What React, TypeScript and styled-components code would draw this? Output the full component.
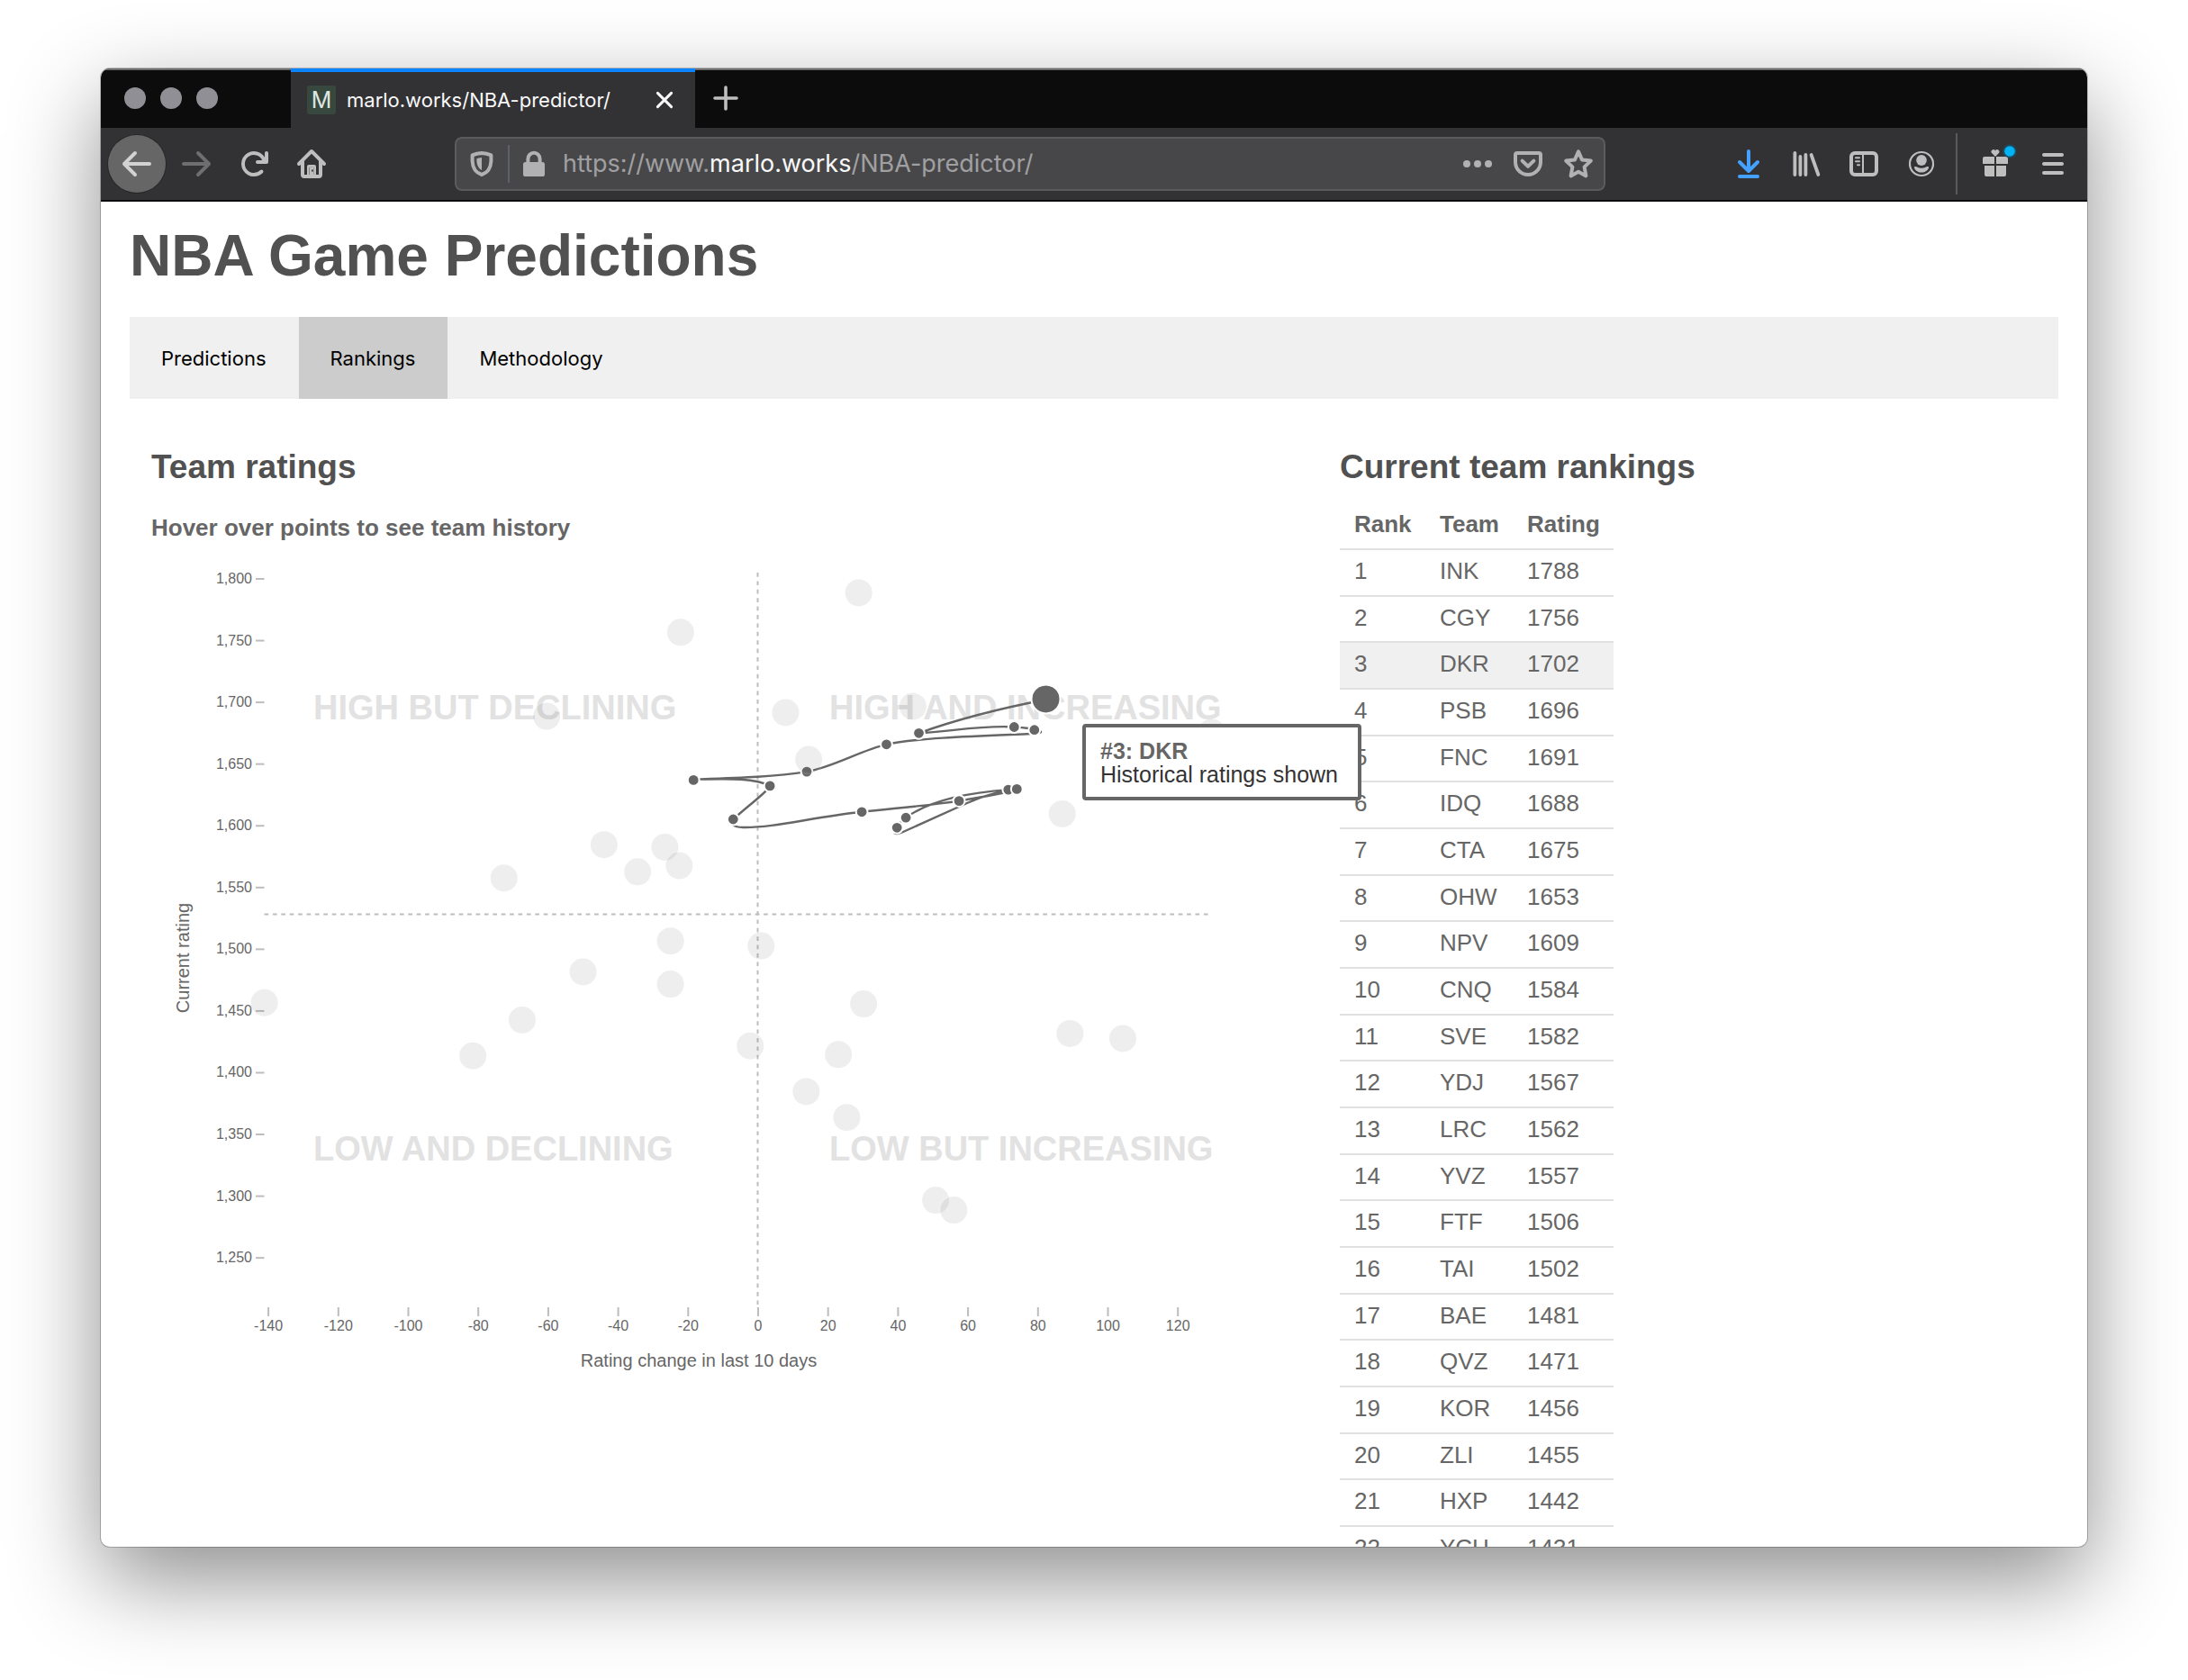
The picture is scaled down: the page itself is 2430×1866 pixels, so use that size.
import React from "react";
import styled, { createGlobalStyle, css } from "styled-components";

const sans = `"Liberation Sans", Helvetica, Arial, sans-serif`;
const ui = `Inter, "Helvetica Neue", sans-serif`;

const GlobalStyle = createGlobalStyle`
  *, *::before, *::after { box-sizing: border-box; }
  body { margin: 0; background: #fff; font-family: ${sans}; color: #666; }
  button { margin: 0; padding: 0; border: 0; background: none; font: inherit; color: inherit; cursor: pointer; }
`;

/* ---------- window and browser chrome ---------- */

const Desktop = styled.div`
  display: flex;
  height: 100vh;
  padding: 76px 112px 148px;
  overflow: hidden;
`;

const BrowserWindow = styled.div`
  flex: 1;
  min-width: 0;
  display: flex;
  flex-direction: column;
  border-radius: 10px;
  background: #fff;
  overflow: hidden;
  box-shadow: 0 0 0 1px rgba(0, 0, 0, 0.22), 0 36px 100px rgba(0, 0, 0, 0.45);
`;

const TabBar = styled.div`
  flex: none;
  display: flex;
  align-items: center;
  height: 66px;
  padding-left: 26px;
  background: #0c0c0d;
  box-shadow: inset 0 2px 0 #6c6c6d;
`;

const Lights = styled.div`
  display: flex;
  gap: 16px;
  width: 185px;
`;

const Light = styled.button`
  width: 24px;
  height: 24px;
  border-radius: 50%;
  background: #918f96;
`;

const Tab = styled.div`
  display: flex;
  align-items: center;
  width: 449px;
  height: 66px;
  padding: 0 18px;
  border-top: 4px solid #0a84ff;
  background: #323234;
  color: #f9f9fa;
  font: 400 22px/28px ${ui};
`;

const Favicon = styled.span`
  width: 32px;
  height: 32px;
  margin-right: 12px;
  border-radius: 3px;
  background: #37493f;
  color: #dfe6e2;
  font: 400 25px/32px ${ui};
  text-align: center;
`;

const TabTitle = styled.span`
  flex: 1;
  white-space: nowrap;
`;

const TabButton = styled.button`
  display: flex;
  align-items: center;
  justify-content: center;
  width: 32px;
  height: 32px;
`;

const NewTab = styled(TabButton)`
  margin-left: 18px;
`;

const Toolbar = styled.div`
  flex: none;
  display: flex;
  align-items: center;
  height: 82px;
  padding: 0 6px 0 8px;
  border-bottom: 2px solid #0c0c0d;
  background: #323234;
  color: #bebebf;
`;

const ToolButton = styled.button<{ $round?: boolean; $dim?: boolean; $tint?: string }>`
  flex: none;
  display: flex;
  align-items: center;
  justify-content: center;
  width: 64px;
  height: 64px;
  color: ${(p) => p.$tint ?? (p.$dim ? "#6e6e70" : "inherit")};
  ${(p) =>
    p.$round &&
    css`
      margin-right: 2px;
      border-radius: 50%;
      background: #666667;
      color: #d2d2d3;
      box-shadow: 0 0 0 1px #272728;
    `}
`;

const Divider = styled.span`
  flex: none;
  width: 2px;
  height: 68px;
  margin: 0 10px 0 6px;
  background: #5a5a5c;
`;

const UrlBar = styled.div`
  flex: 1;
  min-width: 0;
  display: flex;
  align-items: center;
  height: 60px;
  margin: 0 127px;
  padding-left: 12px;
  border: 2px solid #5b5b5d;
  border-radius: 8px;
  background: #474749;
  color: #b1b1b3;
`;

const UrlDivider = styled.span`
  width: 2px;
  height: 42px;
  margin: 0 11px 0 13px;
  background: #5c616b;
`;

const UrlText = styled.div`
  flex: 1;
  min-width: 0;
  margin-left: 16px;
  overflow: hidden;
  white-space: nowrap;
  color: #a0a0a2;
  font: 400 27px/34px ${ui};
  strong {
    color: #f9f9fa;
    font-weight: 400;
  }
`;

const UrlButton = styled.button<{ $tight?: boolean }>`
  flex: none;
  display: flex;
  align-items: center;
  justify-content: center;
  width: ${(p) => (p.$tight ? 32 : 56)}px;
  height: 56px;
`;

const Glyph = styled.svg`
  display: block;
  width: 32px;
  height: 32px;
  overflow: visible;
  fill: currentColor;
`;

const Line = styled.g<{ $w?: number }>`
  fill: none;
  stroke: currentColor;
  stroke-width: ${(p) => p.$w ?? 2};
  stroke-linecap: round;
  stroke-linejoin: round;
`;

const Icon = ({ children }: { children: React.ReactNode }) => (
  <Glyph viewBox="0 0 16 16" aria-hidden="true">
    {children}
  </Glyph>
);

/* ---------- page ---------- */

const Page = styled.main`
  flex: 1;
  min-height: 0;
  overflow: hidden;
  padding: 20px 32px 0;
`;

const Title = styled.h1`
  margin: 0 0 28px;
  color: #515151;
  font-size: 64px;
  line-height: 80px;
`;

const Nav = styled.nav`
  display: flex;
  background: #f0f0f0;
`;

const NavTab = styled.button<{ $active?: boolean }>`
  padding: 32px 36px 31px 35px;
  background: ${(p) => (p.$active ? "#ccc" : "transparent")};
  color: #000;
  font: 400 22px/28px ${ui};
`;

const Columns = styled.div`
  display: grid;
  grid-template-columns: 220fr 137fr;
  padding-top: 54px;
`;

const Column = styled.section`
  min-width: 0;
  padding: 0 24px;
`;

const Heading = styled.h2`
  margin: 0;
  color: #515151;
  font-size: 37px;
  line-height: 44px;
`;

const Hint = styled.h3`
  margin: 30px 0 15px;
  color: #666;
  font-size: 26px;
  line-height: 30px;
`;

const ChartBox = styled.div`
  position: relative;
`;

const Chart = styled.svg`
  display: block;
  width: 100%;
  font-family: ${sans};
`;

const AxisText = styled.text`
  fill: #666;
  font-size: 16px;
`;

const AxisTitle = styled.text`
  fill: #666;
  font-size: 20px;
  text-anchor: middle;
`;

const Quadrant = styled.text`
  fill: #e2e2e2;
  font-size: 38px;
  font-weight: 700;
`;

const Tooltip = styled.div`
  position: absolute;
  left: 1034px;
  top: 188px;
  z-index: 2;
  padding: 13px 22px 12px 16px;
  border: 4px solid #666;
  border-radius: 4px;
  background: #fff;
  color: #333;
  font-size: 25px;
  line-height: 26px;
  white-space: nowrap;
  strong {
    display: block;
    color: #666;
  }
`;

const Table = styled.table`
  margin-top: 17px;
  border-collapse: separate;
  border-spacing: 0;
  table-layout: fixed;
  width: 304px;
  font-size: 26px;
  line-height: 30px;
  text-align: left;
  th {
    padding: 9px 0 12px 16px;
    border-bottom: 2px solid #e0e0e0;
  }
  th:nth-child(1) { width: 95px; }
  th:nth-child(2) { width: 97px; }
  td {
    padding: 8px 0 12px 16px;
    border-bottom: 2px solid #e0e0e0;
  }
  tbody tr:nth-child(3n + 2) td { padding-bottom: 11px; }
`;

const Row = styled.tr<{ $active?: boolean }>`
  background: ${(p) => (p.$active ? "#f0f0f0" : "transparent")};
`;

/* ---------- data ---------- */

type Team = { team: string; rating: number; change: number };

const teams: Team[] = [
  { team: "INK", rating: 1788, change: 29 },
  { team: "CGY", rating: 1756, change: -21.9 },
  { team: "DKR", rating: 1702, change: 82.5 },
  { team: "PSB", rating: 1696, change: 44.5 },
  { team: "FNC", rating: 1691, change: 8.1 },
  { team: "IDQ", rating: 1688, change: -60.2 },
  { team: "CTA", rating: 1675, change: 129.9 },
  { team: "OHW", rating: 1653, change: 14.7 },
  { team: "NPV", rating: 1609, change: 87.2 },
  { team: "CNQ", rating: 1584, change: -43.8 },
  { team: "SVE", rating: 1582, change: -26.4 },
  { team: "YDJ", rating: 1567, change: -22.3 },
  { team: "LRC", rating: 1562, change: -34.2 },
  { team: "YVZ", rating: 1557, change: -72.4 },
  { team: "FTF", rating: 1506, change: -24.8 },
  { team: "TAI", rating: 1502, change: 1.1 },
  { team: "BAE", rating: 1481, change: -49.8 },
  { team: "QVZ", rating: 1471, change: -24.8 },
  { team: "KOR", rating: 1456, change: -140.9 },
  { team: "ZLI", rating: 1455, change: 30.4 },
  { team: "HXP", rating: 1442, change: -67.2 },
  { team: "YCH", rating: 1431, change: 89.4 },
];

/* change and rating of the teams ranked below the table's visible part */
const tail: [number, number][] = [
  [104.5, 1427], [-2, 1421], [23.2, 1414], [-81.3, 1413],
  [14, 1384], [25.6, 1363], [51, 1296], [56.2, 1288],
];

const active = "DKR";

const history: [number, number][] = [
  [996.2, 919.3], [1006.1, 908.2], [1119.8, 877.1], [1129.3, 876.4], [1065.1, 889.6],
  [957.1, 901.8], [814.3, 910], [855.1, 872.9], [770.2, 866.4], [896, 857.1],
  [984.5, 826.8], [1148.8, 810.7], [1126.3, 807.5], [1020.5, 814.3],
];

const trail =
  "M1161.8 777C1110 787 1060 800 1020.5 814.3C1054 813 1090 805 1126.3 807.5C1136 808 1146 809 1155 812" +
  "C1158 813.5 1155 814.6 1145 815C1100 817 1020 819 984.5 826.8C957 833 925 852 896 857.1" +
  "C860 863 820 864 770.2 865.6C790 866 835 862 855.1 872.9C851 881 835 891 814.3 910" +
  "C811 916 815 918.6 825 919C860 919.6 900 908 957.1 901.8C990 898 1030 895 1065.1 889.6" +
  "C1086 886 1105 883 1129.3 877.5C1118 878 1100 880 1074 892L1003 924C998 926.5 995 926.5 993 925" +
  "M996.2 919.3C999 914 1002 911 1006.1 908.2C1035 887 1080 880 1119.8 877.1";

const x = (v: number) => 673 + v * 3.885;
const y = (r: number) => 26 + (1800 - r) * 1.3712;
const xTicks = Array.from({ length: 14 }, (_, i) => -140 + i * 20);
const yTicks = Array.from({ length: 12 }, (_, i) => 1800 - i * 50);

const RatingsChart = () => (
  <Chart viewBox="0 0 1272 924" role="img" aria-label="Team ratings against rating change">
    <g stroke="#bdbdbd" strokeWidth="2">
      {yTicks.map((t) => (
        <line key={t} x1="116" x2="125.5" y1={y(t) + 1} y2={y(t) + 1} />
      ))}
      {xTicks.map((t) => (
        <line key={t} x1={x(t) + 1} x2={x(t) + 1} y1="836" y2="846" />
      ))}
      <g strokeDasharray="4.7 4.7">
        <line x1="673.5" x2="673.5" y1="20" y2="835" />
        <line x1="125.5" x2="1178" y1="399.5" y2="399.5" />
      </g>
    </g>
    {yTicks.map((t) => (
      <AxisText key={t} x="112" y={y(t) + 6} textAnchor="end">
        {t.toLocaleString("en-US")}
      </AxisText>
    ))}
    {xTicks.map((t) => (
      <AxisText key={t} x={x(t) + 1} y="862" textAnchor="middle">
        {t}
      </AxisText>
    ))}
    <AxisTitle x="608" y="902">Rating change in last 10 days</AxisTitle>
    <AxisTitle transform="translate(42 448) rotate(-90)">Current rating</AxisTitle>
    <Quadrant x="180" y="183">HIGH BUT DECLINING</Quadrant>
    <Quadrant x="753" y="183">HIGH AND INCREASING</Quadrant>
    <Quadrant x="180" y="673">LOW AND DECLINING</Quadrant>
    <Quadrant x="753" y="673">LOW BUT INCREASING</Quadrant>
    <g transform="translate(-168 -616)">
      <path d={trail} fill="none" stroke="#666" strokeWidth="2.4" />
      <g fill="#666" stroke="#fff" strokeWidth="2">
        {history.map(([cx, cy]) => (
          <circle key={cx} cx={cx} cy={cy} r="6.4" />
        ))}
      </g>
    </g>
    <g stroke="#fff" strokeWidth="2" fill="#666">
      {teams.map((t) => (
        <circle key={t.team} cx={x(t.change)} cy={y(t.rating)} r="16" opacity={t.team === active ? 1 : 0.1} />
      ))}
      {tail.map(([c, r]) => (
        <circle key={c} cx={x(c)} cy={y(r)} r="16" opacity="0.1" />
      ))}
    </g>
  </Chart>
);

export default function App() {
  return (
    <>
      <GlobalStyle />
      <Desktop>
        <BrowserWindow>
          <TabBar>
            <Lights>
              <Light aria-label="Close window" />
              <Light aria-label="Minimise window" />
              <Light aria-label="Zoom window" />
            </Lights>
            <Tab>
              <Favicon>M</Favicon>
              <TabTitle>marlo.works/NBA-predictor/</TabTitle>
              <TabButton aria-label="Close tab">
                <Icon>
                  <Line $w={1.5}>
                    <path d="M4.2 4.2l7.6 7.6M11.8 4.2l-7.6 7.6" />
                  </Line>
                </Icon>
              </TabButton>
            </Tab>
            <NewTab aria-label="New tab">
              <Icon>
                <g color="#bebebf">
                  <Line $w={1.8}>
                    <path d="M8 2v12M2 8h12" />
                  </Line>
                </g>
              </Icon>
            </NewTab>
          </TabBar>

          <Toolbar>
            <ToolButton $round aria-label="Back">
              <Icon>
                <path d="M15 7H3.414l4.293-4.293a1 1 0 0 0-1.414-1.414l-6 6a1 1 0 0 0 0 1.414l6 6a1 1 0 0 0 1.414-1.414L3.414 9H15a1 1 0 0 0 0-2z" />
              </Icon>
            </ToolButton>
            <ToolButton $dim aria-label="Forward">
              <Icon>
                <path d="M1 7h11.586L8.293 2.707a1 1 0 0 1 1.414-1.414l6 6a1 1 0 0 1 0 1.414l-6 6a1 1 0 0 1-1.414-1.414L12.586 9H1a1 1 0 0 1 0-2z" />
              </Icon>
            </ToolButton>
            <ToolButton aria-label="Reload">
              <Icon>
                <path d="M15 1a1 1 0 0 0-1 1v2.418A6.995 6.995 0 1 0 8 15a6.954 6.954 0 0 0 4.95-2.05 1 1 0 0 0-1.414-1.414A5.019 5.019 0 1 1 12.549 6H10a1 1 0 0 0 0 2h5a1 1 0 0 0 1-1V2a1 1 0 0 0-1-1z" />
              </Icon>
            </ToolButton>
            <ToolButton aria-label="Home">
              <Icon>
                <path
                  fillRule="evenodd"
                  d="M15.707 7.293l-7-7a1 1 0 0 0-1.414 0l-7 7a1 1 0 0 0 1.414 1.414L2 8.414V14a2 2 0 0 0 2 2h8a2 2 0 0 0 2-2V8.414l.293.293a1 1 0 0 0 1.414-1.414zM12 14h-1.5V9.5a1 1 0 0 0-1-1h-3a1 1 0 0 0-1 1V14H4V6.414l4-4 4 4zM6.8 10.2a.5.5 0 0 1 .5-.5h1.4a.5.5 0 0 1 .5.5V14H6.8z"
                />
                <path d="M7 9.6h2.2V14H7z" />
                <path fill="#323234" d="M8 11.2h.9v1H8z" />
              </Icon>
            </ToolButton>

            <UrlBar>
              <UrlButton $tight aria-label="Tracking protection">
                <Icon>
                  <Line>
                    <path d="M8 2C6.2 2.1 4.4 2.5 2.8 3.2V6.5C3 10.3 4.8 13 8 14c3.2-1 5-3.7 5.2-7.5V3.2C11.6 2.5 9.8 2.1 8 2z" />
                  </Line>
                  <path d="M8 4.5C6.9 4.6 6 4.8 5.2 5.1v1.6C5.4 8.9 6.3 10.6 8 11.5z" />
                </Icon>
              </UrlButton>
              <UrlDivider />
              <UrlButton $tight aria-label="Site information">
                <Icon>
                  <rect x="2" y="7" width="12" height="8" rx="1.3" />
                  <Line>
                    <path d="M4.7 7V5.2a3.3 3.3 0 0 1 6.6 0V7" />
                  </Line>
                </Icon>
              </UrlButton>
              <UrlText role="textbox" aria-label="Address" tabIndex={0}>
                https://www.<strong>marlo.works</strong>/NBA-predictor/
              </UrlText>
              <UrlButton aria-label="Page actions">
                <Icon>
                  <circle cx="2" cy="8" r="2" />
                  <circle cx="8" cy="8" r="2" />
                  <circle cx="14" cy="8" r="2" />
                </Icon>
              </UrlButton>
              <UrlButton aria-label="Save to Pocket">
                <Icon>
                  <Line>
                    <path d="M2 2h12a1 1 0 0 1 1 1v4a7 7 0 0 1-14 0V3a1 1 0 0 1 1-1z" />
                    <path d="M4.8 6.3L8 9.4l3.2-3.1" />
                  </Line>
                </Icon>
              </UrlButton>
              <UrlButton aria-label="Bookmark this page">
                <Icon>
                  <Line>
                    <path d="M8 1.2l2 4.5 4.9.6-3.6 3.4.9 5L8 12.4l-4.2 2.3.9-5L1.1 6.3 6 5.7z" />
                  </Line>
                </Icon>
              </UrlButton>
            </UrlBar>

            <ToolButton $tint="#45a1ff" aria-label="Downloads">
              <Icon>
                <Line>
                  <path d="M8 1v11M3 7l5 5 5-5M3 15h10" />
                </Line>
              </Icon>
            </ToolButton>
            <ToolButton aria-label="Library">
              <Icon>
                <Line $w={1.9}>
                  <path d="M1.7 2v12M4.7 4v10M7.7 3v11M10.8 3l3.9 11" />
                </Line>
              </Icon>
            </ToolButton>
            <ToolButton aria-label="Sidebars">
              <Icon>
                <Line>
                  <rect x="1" y="2" width="14" height="12" rx="2" />
                </Line>
                <Line $w={1}>
                  <path d="M7.5 3v10M3.5 4.6h2M3.5 6.6h2M4.5 8.6h1" />
                </Line>
              </Icon>
            </ToolButton>
            <ToolButton aria-label="Account">
              <Icon>
                <Line $w={1.1}>
                  <circle cx="8" cy="8" r="6.5" />
                </Line>
                <ellipse cx="8" cy="6" rx="2.9" ry="3" />
                <path d="M4 9.6c1.2-.6 2 .8 4 .8s2.8-1.4 4-.8c.2 1.8-2 3.2-4 3.2s-4.2-1.4-4-3.2z" />
              </Icon>
            </ToolButton>
            <Divider />
            <ToolButton aria-label="What's new">
              <Icon>
                <path d="M8 4L5.9 1.9A1.1 1.1 0 0 1 8 .7a1.1 1.1 0 0 1 2.1 1.2z" />
                <path d="M2 4h5.5v4H1V5a1 1 0 0 1 1-1zM8.5 4H14a1 1 0 0 1 1 1v3H8.5zM2 9h5.5v6H3a1 1 0 0 1-1-1zM8.5 9H14v5a1 1 0 0 1-1 1H8.5z" />
                <circle cx="16" cy="1" r="3.8" fill="#0d5f80" opacity="0.6" />
                <circle cx="16" cy="1" r="2.9" fill="#00b3f4" />
              </Icon>
            </ToolButton>
            <ToolButton aria-label="Menu">
              <Icon>
                <Line>
                  <path d="M3 3h10M3 8h10M3 13h10" />
                </Line>
              </Icon>
            </ToolButton>
          </Toolbar>

          <Page>
            <Title>NBA Game Predictions</Title>
            <Nav>
              <NavTab>Predictions</NavTab>
              <NavTab $active>Rankings</NavTab>
              <NavTab>Methodology</NavTab>
            </Nav>
            <Columns>
              <Column>
                <Heading>Team ratings</Heading>
                <Hint>Hover over points to see team history</Hint>
                <ChartBox>
                  <RatingsChart />
                  <Tooltip role="tooltip">
                    <strong>#3: DKR</strong>
                    Historical ratings shown
                  </Tooltip>
                </ChartBox>
              </Column>
              <Column>
                <Heading>Current team rankings</Heading>
                <Table>
                  <thead>
                    <tr>
                      <th>Rank</th>
                      <th>Team</th>
                      <th>Rating</th>
                    </tr>
                  </thead>
                  <tbody>
                    {teams.map((t, i) => (
                      <Row key={t.team} $active={t.team === active}>
                        <td>{i + 1}</td>
                        <td>{t.team}</td>
                        <td>{t.rating}</td>
                      </Row>
                    ))}
                  </tbody>
                </Table>
              </Column>
            </Columns>
          </Page>
        </BrowserWindow>
      </Desktop>
    </>
  );
}
